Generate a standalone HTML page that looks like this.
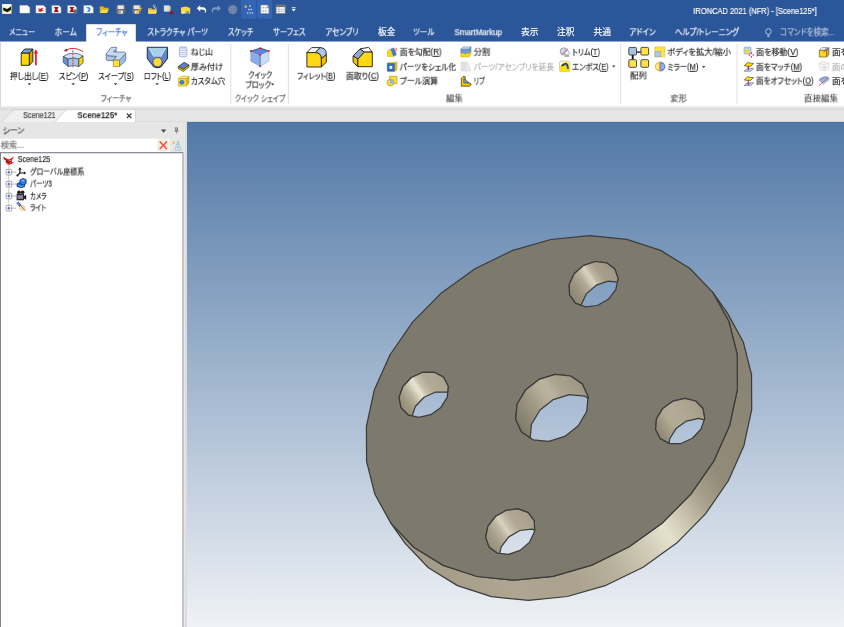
<!DOCTYPE html>
<html lang="ja"><head><meta charset="utf-8"><title>IRONCAD 2021 (NFR) - [Scene125*]</title>
<style>
html,body{margin:0;padding:0;}
body{width:844px;height:627px;overflow:hidden;position:relative;background:#fff;font-family:"Liberation Sans","Noto Sans CJK JP",sans-serif;}
.t{position:absolute;white-space:nowrap;line-height:14px;height:14px;transform-origin:0 50%;font-feature-settings:"palt";letter-spacing:0;will-change:transform;}
.t{-webkit-text-stroke:0.15px currentColor;}
.t u{text-decoration:underline;text-underline-offset:1px;text-decoration-thickness:0.6px;}
.disc{position:absolute;left:188px;top:122px;}
svg{position:absolute;overflow:visible;}
</style></head><body>
<svg class="bg" width="844" height="627" viewBox="0 0 844 627" style="left:0;top:0;">
<defs><linearGradient id="gview" x1="0" y1="0" x2="0" y2="1"><stop offset="0" stop-color="#5178a6"/><stop offset="1" stop-color="#eff2f6"/></linearGradient></defs>
<rect x="0" y="0" width="844" height="627" fill="#e6e6e6"/>
<rect x="0" y="0" width="844" height="41.700" fill="#2b579a"/>
<rect x="86.200" y="24.200" width="49.600" height="18" fill="#ffffff"/>
<rect x="0" y="41.700" width="844" height="65.200" fill="#ffffff"/>
<rect x="0" y="41.700" width="1" height="65.200" fill="#d9d9d9"/>
<path d="M0 107h844" stroke="#dadada" stroke-width=".7"/>
<g stroke="#e2e2e2" stroke-width="1"><path d="M230.800 44v60M288.400 44v60M620.600 44v60M737 44v60"/></g>
<rect x="0" y="138.700" width="169.800" height="13.600" fill="#ffffff"/>
<rect x="0.400" y="152.700" width="182.700" height="476" fill="#ffffff" stroke="#7c7e8c" stroke-width="1.100"/>
<rect x="183.700" y="121.800" width="3.600" height="506" fill="#dddddc"/><rect x="183.700" y="121.800" width="1.200" height="506" fill="#e9e9e9"/>
<rect x="187" y="121.900" width="657" height="505.100" fill="url(#gview)"/>
<rect x="187" y="121.900" width="657" height="1" fill="#486f9f" opacity=".6"/>
</svg>
<svg class="disc" width="656" height="505" viewBox="188 122 656 505">
<defs>
<linearGradient id="gside" gradientUnits="userSpaceOnUse" x1="402.7" y1="540.0" x2="729.7" y2="316.2">
<stop offset="0" stop-color="#a19a85"/><stop offset="0.15" stop-color="#aea690"/><stop offset="0.3" stop-color="#aaa28d"/><stop offset="0.4" stop-color="#b8b19b"/><stop offset="0.5" stop-color="#d2cdb8"/><stop offset="0.56" stop-color="#e4e2ce"/><stop offset="0.62" stop-color="#c9c3ad"/><stop offset="0.68" stop-color="#a9a18b"/><stop offset="0.75" stop-color="#928b78"/><stop offset="1" stop-color="#888273"/>
</linearGradient>
<linearGradient id="gh0" gradientUnits="userSpaceOnUse" x1="519.9" y1="429.8" x2="583.9" y2="386.0"><stop offset="0" stop-color="#7d7869"/><stop offset="0.15" stop-color="#8d8776"/><stop offset="0.35" stop-color="#a39b87"/><stop offset="0.52" stop-color="#b7b09a"/><stop offset="0.6" stop-color="#b9b29c"/><stop offset="0.72" stop-color="#aca48f"/><stop offset="1" stop-color="#9c9581"/></linearGradient>
<linearGradient id="gh1" gradientUnits="userSpaceOnUse" x1="571.7" y1="299.0" x2="615.1" y2="269.3"><stop offset="0" stop-color="#8a8473"/><stop offset="0.2" stop-color="#9b937f"/><stop offset="0.38" stop-color="#b3ab96"/><stop offset="0.47" stop-color="#cdc8b4"/><stop offset="0.53" stop-color="#d6d2be"/><stop offset="0.6" stop-color="#bcb59f"/><stop offset="0.72" stop-color="#a8a08b"/><stop offset="1" stop-color="#9e9682"/></linearGradient>
<linearGradient id="gh2" gradientUnits="userSpaceOnUse" x1="658.3" y1="436.2" x2="701.7" y2="406.4"><stop offset="0" stop-color="#8a8473"/><stop offset="0.15" stop-color="#9c9480"/><stop offset="0.35" stop-color="#b2aa95"/><stop offset="0.5" stop-color="#b3ab96"/><stop offset="0.8" stop-color="#aca48f"/><stop offset="1" stop-color="#a39b86"/></linearGradient>
<linearGradient id="gh3" gradientUnits="userSpaceOnUse" x1="488.7" y1="546.5" x2="532.1" y2="516.8"><stop offset="0" stop-color="#938c78"/><stop offset="0.18" stop-color="#a39c87"/><stop offset="0.34" stop-color="#b9b29c"/><stop offset="0.46" stop-color="#d6d3bf"/><stop offset="0.54" stop-color="#c4beaa"/><stop offset="0.67" stop-color="#b0a893"/><stop offset="1" stop-color="#a8a08b"/></linearGradient>
<linearGradient id="gh4" gradientUnits="userSpaceOnUse" x1="402.1" y1="409.4" x2="445.5" y2="379.6"><stop offset="0" stop-color="#928b78"/><stop offset="0.15" stop-color="#a09883"/><stop offset="0.3" stop-color="#bab39d"/><stop offset="0.42" stop-color="#dedbc7"/><stop offset="0.47" stop-color="#e6e4d2"/><stop offset="0.55" stop-color="#c8c2ad"/><stop offset="0.68" stop-color="#b3ab96"/><stop offset="1" stop-color="#aaa28d"/></linearGradient>
</defs>
<path d="M405.3 543.6 L428.4 567.7 L457.5 585.6 L491.4 596.7 L528.5 600.4 L567.3 596.5 L606.1 585.3 L643.1 567.2 L676.7 543.1 L705.5 513.9 L728.2 481.0 L743.9 445.7 L751.7 409.7 L751.5 374.5 L743.2 341.7 L727.1 312.6 L712.8 292.4 L728.9 321.5 L737.2 354.3 L737.4 389.5 L729.6 425.5 L713.9 460.8 L691.2 493.7 L662.4 522.9 L628.8 547.0 L591.8 565.1 L553.0 576.3 L514.2 580.2 L477.1 576.5 L443.2 565.4 L414.1 547.5 L391.0 523.4Z" fill="url(#gside)" stroke="#3c3c3c" stroke-width="1.25" stroke-linejoin="round"/>
<path d="M550.8 239.5 L512.0 250.7 L475.0 268.8 L441.4 292.9 L412.6 322.1 L389.9 355.0 L374.2 390.3 L366.4 426.3 L366.6 461.5 L374.9 494.3 L391.0 523.4 L414.1 547.5 L443.2 565.4 L477.1 576.5 L514.2 580.2 L553.0 576.3 L591.8 565.1 L628.8 547.0 L662.4 522.9 L691.2 493.7 L713.9 460.8 L729.6 425.5 L737.4 389.5 L737.2 354.3 L728.9 321.5 L712.8 292.4 L689.7 268.3 L660.6 250.4 L626.7 239.3 L589.6 235.6ZM548.7 441.4 L533.2 439.8 L521.5 431.9 L515.7 419.2 L517.1 404.3 L525.5 390.1 L539.0 379.4 L555.1 374.4 L570.6 376.0 L582.3 383.9 L588.1 396.6 L586.7 411.5 L578.3 425.7 L564.8 436.4ZM597.4 305.5 L585.6 306.9 L575.6 303.1 L569.6 294.9 L569.2 284.3 L574.2 273.7 L583.7 265.4 L595.4 261.5 L606.6 262.8 L614.8 268.9 L618.1 278.6 L615.8 289.6 L608.3 299.3ZM692.4 438.3 L681.0 443.5 L669.4 443.5 L660.2 438.5 L655.6 429.5 L656.5 418.7 L662.8 408.4 L673.1 401.1 L684.9 398.4 L695.6 401.0 L702.8 408.2 L704.7 418.4 L700.9 429.3ZM529.6 542.1 L520.1 550.4 L508.4 554.3 L497.2 553.0 L489.0 546.9 L485.7 537.2 L488.0 526.2 L495.5 516.5 L506.4 510.3 L518.2 508.9 L528.2 512.7 L534.2 520.9 L534.6 531.5ZM447.3 397.2 L440.9 407.4 L430.7 414.7 L418.8 417.4 L408.1 414.8 L401.0 407.6 L399.1 397.4 L402.9 386.5 L411.4 377.5 L422.8 372.3 L434.4 372.3 L443.6 377.3 L448.2 386.3Z" fill="#7d796c" fill-rule="evenodd" stroke="#3c3c3c" stroke-width="1.25" stroke-linejoin="round"/>
<path d="M588.1 396.6 L582.3 383.9 L570.6 376.0 L555.1 374.4 L539.0 379.4 L525.5 390.1 L517.1 404.3 L515.7 419.2 L521.5 431.9 L530.2 437.8 L531.4 424.5 L539.8 410.3 L553.3 399.6 L569.4 394.6 L584.9 396.2 L587.9 398.2Z" fill="url(#gh0)" stroke="#3c3c3c" stroke-width="1.25" stroke-linejoin="round"/>
<path d="M618.1 278.6 L614.8 268.9 L606.6 262.8 L595.4 261.5 L583.7 265.4 L574.2 273.7 L569.2 284.3 L569.6 294.9 L575.6 303.1 L581.3 305.3 L581.3 304.5 L586.5 293.6 L596.2 285.2 L608.1 281.2 L617.4 282.2Z" fill="url(#gh1)" stroke="#3c3c3c" stroke-width="1.25" stroke-linejoin="round"/>
<path d="M704.7 418.4 L702.8 408.2 L695.6 401.0 L684.9 398.4 L673.1 401.1 L662.8 408.4 L656.5 418.7 L655.6 429.5 L660.2 438.5 L669.2 443.4 L669.6 439.0 L676.0 428.6 L686.5 421.1 L698.5 418.4 L704.2 419.8Z" fill="url(#gh2)" stroke="#3c3c3c" stroke-width="1.25" stroke-linejoin="round"/>
<path d="M534.2 520.9 L528.2 512.7 L518.2 508.9 L506.4 510.3 L495.5 516.5 L488.0 526.2 L485.7 537.2 L489.0 546.9 L497.2 553.0 L499.8 553.3 L501.2 546.8 L508.8 536.9 L519.8 530.5 L531.8 529.1 L534.6 530.2Z" fill="url(#gh3)" stroke="#3c3c3c" stroke-width="1.25" stroke-linejoin="round"/>
<path d="M448.2 386.3 L443.6 377.3 L434.4 372.3 L422.8 372.3 L411.4 377.5 L402.9 386.5 L399.1 397.4 L401.0 407.6 L408.1 414.8 L412.1 415.8 L415.3 406.5 L424.0 397.3 L435.7 392.0 L447.5 392.0 L447.7 392.1Z" fill="url(#gh4)" stroke="#3c3c3c" stroke-width="1.25" stroke-linejoin="round"/>
</svg>
<svg class="icons" width="844" height="627" viewBox="0 0 844 627" style="left:0;top:0;">
<!-- ===== quick access toolbar ===== -->
<g id="qat">
<rect x="241" y="0" width="15.2" height="18.6" fill="#3365b4"/>
<rect x="257.2" y="0" width="15" height="18.6" fill="#3365b4"/>
<!-- app icon -->
<rect x="2" y="4" width="9.6" height="10" fill="#e9dc8a"/>
<path d="M2.4 4.3h8.8v4.2l-4.2 2.2-4.6-2.4z" fill="#f4f4f4"/>
<path d="M3.2 7.4l3.9 1.6 3.9-2.6v3.3l-3.6 2.5-4.2-2z" fill="#141414"/>
<path d="M3 11.2l4.2 1.7 3.6-2.2v1.5l-3.6 1.6-4.2-1.4z" fill="#fff"/>
<!-- new doc -->
<path d="M19.9 5.6h7.6l2.2 2v5.4h-9.8z" fill="#fdfdfd" stroke="#d9d9d9" stroke-width=".5"/>
<!-- doc + red bird -->
<path d="M36 5.6h7.6l2 2v5.4H36z" fill="#fbfbfb" stroke="#cfcfcf" stroke-width=".5"/>
<path d="M37.3 7.5l2.6 1.4 3.6-1.5-1.6 2.6 2 .6-3 1.2-3.2-.6 1.6-1.3z" fill="#d01818"/>
<!-- doc + red hourglass -->
<path d="M51.9 5.6h7l2.1 2v5.4h-9.1z" fill="#f7f7f7" stroke="#bdbdbd" stroke-width=".5"/>
<path d="M54 7h4.6l-1.3 2.4 1.5 2.6h-5l1.5-2.6z" fill="#a80f0f"/>
<!-- doc + red hourglass + gray -->
<path d="M67.6 5.6h7l2.1 2v5.4h-9.1z" fill="#f3f3f3" stroke="#a9a9a9" stroke-width=".5"/>
<path d="M69.6 7h4.6l-1.3 2.4 1.5 2.6h-5l1.5-2.6z" fill="#a80f0f"/>
<rect x="73.6" y="9.4" width="3.4" height="3.8" fill="#6e6e6e"/>
<!-- doc + blue -->
<path d="M83.8 5.6h7.2l2.2 2v5.4h-9.4z" fill="#fafafa" stroke="#c4c4c4" stroke-width=".5"/>
<path d="M86 7.2l3.2-.3 1.6 2.3-1.2 2.6-2.6.2 1.3-2.2z" fill="#2f8fe0"/>
<path d="M87.2 8.2l1.8 1.6" stroke="#d6ecff" stroke-width=".8"/>
<!-- folder -->
<path d="M99.8 6.6h3.6l1 1.1h4v1.6h-6.3l-2.3 3.8z" fill="#e0b226"/>
<path d="M102 9.3h7l-2 3.8h-7.2z" fill="#f7d65a"/>
<!-- save -->
<rect x="116.2" y="4.8" width="9" height="8.9" rx="1.2" fill="#6d6d6f"/>
<rect x="117.7" y="5.4" width="6" height="3.6" fill="#e8e8ea"/>
<rect x="118.6" y="10.6" width="4.2" height="3.1" fill="#f2f2f2"/>
<rect x="119.3" y="11.2" width="1.3" height="2" fill="#555"/>
<!-- save as -->
<rect x="132.2" y="4.8" width="9" height="8.9" rx="1.2" fill="#6d6d6f"/>
<rect x="133.7" y="5.4" width="6" height="3.6" fill="#e8e8ea"/>
<rect x="134.6" y="10.6" width="4.2" height="3.1" fill="#f2f2f2"/>
<path d="M136.2 12.4l4.6-5.2 1.2 1-4.6 5.2-1.6.5z" fill="#f0b429"/>
<!-- folder + blue -->
<path d="M148 8.2h3.4l1 1h4.2v4.4H148z" fill="#e8bc2c"/>
<path d="M148.6 10.6h8.2l-1 3.1h-7.6z" fill="#f9d95e"/>
<path d="M152.4 5l2.6-1.2 2.8 4.4-1.8 1.6z" fill="#3c76c8"/>
<path d="M153 5.4l3.4 4.8" stroke="#f5d44f" stroke-width="1"/>
<!-- doc + star -->
<path d="M164 5.4h5l1.4 1.4v4.6H164z" fill="#d6e6f8" stroke="#9fbfe6" stroke-width=".5"/>
<rect x="168.3" y="6.6" width="1.6" height="3.6" fill="#f3d24a"/>
<path d="M171.3 10v5M168.8 12.5h5M169.6 10.8l3.4 3.4M173 10.8l-3.4 3.4" stroke="#8a1430" stroke-width=".9"/>
<!-- yellow dots thing -->
<path d="M181 7.4l5-1 4.2 1.6v5.4H181z" fill="#f7d83e"/>
<circle cx="181.4" cy="5.6" r=".8" fill="#3b5c9a"/>
<rect x="182.4" y="11.6" width="2" height="2" fill="#e8eef8"/>
<rect x="186.6" y="11.4" width="2.2" height="2.2" fill="#2e86de"/>
<!-- undo -->
<path d="M196.8 8.3l3.4-3v2h2.6c2.200 0 3.400 1.500 3.400 3.300 0 1.300-.7 2.200-1.700 2.700.4-.6.500-1.100.5-1.700 0-1.300-.9-2.200-2.400-2.200h-2.400v2z" fill="#fff"/>
<!-- redo (dim) -->
<path d="M221 8.300l-3.400-3v2h-2.600c-2.200 0-3.400 1.500-3.400 3.300 0 1.300.7 2.200 1.700 2.700-.4-.6-.5-1.100-.5-1.700 0-1.300.9-2.200 2.400-2.200h2.400v2z" fill="#7895c6"/>
<!-- globe (dim) -->
<circle cx="232.700" cy="9.600" r="4.700" fill="#6a7da6"/>
<path d="M228 9.600h9.400M232.700 4.900v9.400M229.300 6.700c2 1.200 4.800 1.200 6.800 0M229.300 12.500c2-1.200 4.800-1.200 6.800 0" stroke="#8796b8" stroke-width=".5" fill="none"/>
<!-- star + dots -->
<path d="M245.700 4.800l.5 1.100 1.200.1-.9.800.3 1.200-1.100-.6-1.100.6.300-1.200-.9-.8 1.200-.1z" fill="#f5c518"/>
<g fill="#c7dcee"><rect x="249.300" y="5.300" width="1.500" height="1.400"/><rect x="248.200" y="8.800" width="1.400" height="1.400"/><rect x="250.500" y="8.800" width="1.400" height="1.400"/><rect x="247" y="12.300" width="1.300" height="1.300"/><rect x="249.400" y="12.300" width="1.300" height="1.300"/><rect x="251.700" y="12.300" width="1.300" height="1.300"/></g>
<!-- white doc -->
<path d="M260.800 5h6.600l1.500 1.200v7.400h-8.100z" fill="#fbfbfb" stroke="#8a8a8a" stroke-width=".6"/>
<path d="M267.400 5l1.500 1.200v2h-1.500z" fill="#7d7d7d"/>
<g fill="#9aa3ad"><rect x="262.600" y="7" width="1.500" height="1.400"/><rect x="265" y="7" width="1.500" height="1.400"/><rect x="262.600" y="10.400" width="1.500" height="1.400"/><rect x="265" y="10.400" width="1.500" height="1.400"/></g>
<!-- table -->
<rect x="276.100" y="5.100" width="9" height="8.200" fill="#fbfbfb" stroke="#8a8a8a" stroke-width=".6"/>
<rect x="276.100" y="5.100" width="9" height="2" fill="#6f6f6f"/>
<path d="M276.100 9.300h9M276.100 11.300h9M279 7.100v6.200" stroke="#9a9a9a" stroke-width=".6"/>
<!-- dropdown -->
<rect x="291.800" y="7.300" width="3.800" height=".9" fill="#fff"/>
<path d="M291.700 9.100h4l-2 2.400z" fill="#fff"/>
<!-- bulb -->
<g stroke="#c2cee4" stroke-width=".9" fill="none"><circle cx="768.400" cy="31.500" r="2.800"/><path d="M767.200 35.300h2.400M767.500 36.600h1.800"/></g>
</g>
<!-- ===== ribbon: feature group ===== -->
<g id="rib1" stroke-linejoin="round">
<!-- extrude -->
<path d="M21.200 53h8.200v12.300h-8.200z" fill="#ffd800" stroke="#1e1e1e" stroke-width=".9"/>
<path d="M21.200 53l3.600-4h8.100l-3.500 4z" fill="#6aa5e6" stroke="#1e1e1e" stroke-width=".9"/>
<path d="M29.400 53l3.500-4v12.600l-3.500 3.700z" fill="#d9a800" stroke="#1e1e1e" stroke-width=".9"/>
<path d="M35.900 65.200V52.500" stroke="#e31b23" stroke-width="1.700"/>
<path d="M33.700 53.500l2.200-4.200 2.200 4.200z" fill="#e31b23"/>
<!-- spin -->
<path d="M63.300 56.400q9.700-6.400 19.700-.5l-4.200 3.200q-5.300-2.200-10.700 0z" fill="#cfe0f4" stroke="#4a5d80" stroke-width=".8"/>
<path d="M63.300 56.400l4.800 2.700v7.400l-4.800-4z" fill="#6e93c8" stroke="#3c4f73" stroke-width=".8"/>
<path d="M68.100 59.100q5.400-2.200 10.700 0v7.400q-5.300-2-10.700 0z" fill="#a9c3e6" stroke="#3c4f73" stroke-width=".8"/>
<path d="M78.800 59.100l4.200-3.200v6.900l-4.200 3.700z" fill="#ffd800" stroke="#3c3c3c" stroke-width=".8"/>
<path d="M72.900 50.200v17" stroke="#c84a58" stroke-width="1.100" stroke-dasharray="2 1.100"/>
<path d="M65.600 50.200q8.600-4.200 17.400 1.300" fill="none" stroke="#c5303a" stroke-width="1"/>
<path d="M63.600 51l3.300-2.500.5 3.100z" fill="#a01c2c"/>
<!-- sweep -->
<path d="M106.200 53.900Q106.200 55 107.200 55.600L116.600 56.400L113.300 60.200V60.700L107.400 60.500Q106.200 60.100 106.200 59z" fill="#a9c6e8" stroke="#5a6b85" stroke-width=".8"/>
<path d="M125.700 53.500V60.600L119.500 66.600V60.200z" fill="#9dbbea" stroke="#5a6b85" stroke-width=".8"/>
<path d="M106.200 53.900L111.200 47.300H116.600V48.700L113.400 51.900L124.500 52.200Q125.700 52.500 125.700 53.500L119.500 60.200H113.300L116.600 56.400L107.200 55.600Q106.200 55 106.200 53.900z" fill="#c7d9f1" stroke="#5a6b85" stroke-width=".8"/>
<path d="M113.700 51.900L116.600 48.900V51.900z" fill="#5e86c8"/>
<rect x="113.300" y="60.200" width="6.200" height="6.400" fill="#ffe135" stroke="#8a7a3a" stroke-width=".7"/>
<!-- loft -->
<path d="M147.300 47.200h20.200v11.300l-6.300 8q-3.800 2.200-7.600 0l-6.300-8z" fill="#6487c4" stroke="#263a66" stroke-width="1.100"/>
<path d="M148.900 47.900h16.900l-5 8.800h-6.900z" fill="#a3d2ea"/>
<path d="M148.900 47.900l5 8.800M165.800 47.900l-5 8.800" stroke="#f4f8fc" stroke-width=".7"/>
<circle cx="157.500" cy="62.100" r="4.600" fill="#ffd93b" stroke="#33446e" stroke-width=".8"/>
<!-- thread -->
<rect x="179.400" y="46.900" width="7.400" height="10" rx="1.400" fill="#c3d3ea" stroke="#8fa6c8" stroke-width=".7"/>
<path d="M180 49.200h6.200M180 51.500h6.200M180 53.800h6.200M180 55.700h6.200" stroke="#f2f6fb" stroke-width=".9"/>
<!-- thicken -->
<path d="M178.300 66.600l5.800-4.300 4.900 2.700-5.600 4.400z" fill="#5f80be" stroke="#20304f" stroke-width=".7"/>
<path d="M178.300 66.600l5.100 2.800 5.600-4.400v2l-5.600 4.400-5.100-2.800z" fill="#f0c800" stroke="#3a3210" stroke-width=".7"/>
<!-- custom hole -->
<path d="M178.300 78.600l2.800-2.300h7.900l-2.700 2.300z" fill="#fbe88a" stroke="#c9a21c" stroke-width=".6"/>
<path d="M186.300 78.600l2.700-2.300v7.200l-2.700 2.600z" fill="#d9b52a" stroke="#c9a21c" stroke-width=".6"/>
<rect x="178.300" y="78.600" width="8" height="7.500" fill="#f8da3c" stroke="#c9a21c" stroke-width=".6"/>
<circle cx="181.900" cy="82.300" r="2.100" fill="#3a7fd8" stroke="#2a5fa8" stroke-width=".5"/>
<!-- quick block -->
<path d="M250.800 51.100l9.600-3 8.500 3-8.700 3.900z" fill="#5f86d8" stroke="#1e2c4f" stroke-width=".7"/>
<path d="M250.800 51.100l9.400 3.900v11.300l-9.400-5.100z" fill="#8aaee8" stroke="#6f8fc8" stroke-width=".6"/>
<path d="M260.200 55l8.700-3.900v10.100l-8.700 5.100z" fill="#c9dcf6" stroke="#8fabd8" stroke-width=".6"/>
<path d="M260.200 56.500v9" stroke="#2a2a2a" stroke-width=".8" stroke-dasharray="1 1"/>
<g fill="#f01818"><circle cx="250.900" cy="51.100" r="1"/><circle cx="260.400" cy="48.200" r="1"/><circle cx="268.900" cy="51.100" r="1"/><circle cx="260.200" cy="55" r="1"/><circle cx="260.200" cy="66.300" r="1"/></g>
<!-- fillet -->
<path d="M306.900 52.600l4.800-5h8.400l-4.800 5z" fill="#fdfdfd" stroke="#1e1e1e" stroke-width=".9"/>
<path d="M315.300 52.600q6 .4 6 6.400l5-4.500q.3-6.600-6.200-6.900z" fill="#a9c6ea" stroke="#1e1e1e" stroke-width=".9"/>
<path d="M321.300 59l5-4.500v7.700l-5 4.800z" fill="#f2c200" stroke="#1e1e1e" stroke-width=".9"/>
<path d="M306.900 52.600h8.400q6 .4 6 6.400v8h-14.400z" fill="#ffd814" stroke="#1e1e1e" stroke-width=".9"/>
<!-- chamfer -->
<path d="M360 48.900l8.600-1.500 3.700 4.700h-8z" fill="#fdfdfd" stroke="#1e1e1e" stroke-width=".9"/>
<path d="M353.100 55.900l6.900-7 4.300 3.200-6.400 7z" fill="#8fa8d2" stroke="#1e1e1e" stroke-width=".9"/>
<path d="M353.100 55.900l4.800 3.200v7.600l-4.800-4.400z" fill="#f2c200" stroke="#1e1e1e" stroke-width=".9"/>
<path d="M357.900 59.100l6.400-7h8v14.600h-14.400z" fill="#ffd814" stroke="#1e1e1e" stroke-width=".9"/>
<!-- dropdown arrows -->
<g fill="#3a3a3a"><path d="M27.500 83.200h3.600l-1.800 2.100z"/><path d="M71.300 83.200h3.600l-1.800 2.100z"/><path d="M113.800 83.200h3.600l-1.800 2.100z"/><path d="M155.300 83.200h3.600l-1.800 2.100z"/><path d="M270.900 83.500h3.400l-1.700 2z"/><path d="M612 65.600h3.400l-1.700 2z"/><path d="M702 65.900h3.400l-1.700 2z"/></g>
</g>
<!-- ===== ribbon: edit / transform / direct edit ===== -->
<g id="rib2" stroke-linejoin="round">
<!-- draft face -->
<path d="M387.400 50.800l3-2.300 2.600 7.900h-5.600z" fill="#f8d820" stroke="#c9a21c" stroke-width=".5"/>
<path d="M390.800 48.700l2.600-.7 3 6.400-2.600 2z" fill="#3f7fd0" stroke="#27508a" stroke-width=".5"/><path d="M387.400 50.800l3.400-2.100 2.600-.7-2.600-.4-3.200 1.600z" fill="#dfe9f6"/>
<path d="M394.600 48l1.800 3.800M395.800 47.600l1.200 2.600" stroke="#e02626" stroke-width=".6"/>
<!-- shell -->
<path d="M387.300 63.400l2.400-1.200h7.300l-2.600 1.200z" fill="#fbe88a" stroke="#c9a21c" stroke-width=".5"/>
<path d="M394.400 63.400l2.600-1.200v7.800l-2.600 1.400z" fill="#e6bc1c" stroke="#c9a21c" stroke-width=".5"/>
<rect x="387.300" y="63.400" width="7.100" height="7.900" fill="#2f6fc4" stroke="#1f4f94" stroke-width=".5"/>
<rect x="389.500" y="65.900" width="2.700" height="2.900" fill="#f4f7fb"/>
<!-- boolean -->
<rect x="389.600" y="76.300" width="7.300" height="7.400" fill="#fadc3c" stroke="#b8960a" stroke-width=".7"/>
<circle cx="390.500" cy="82.600" r="3.400" fill="#fadc3c" stroke="#b8960a" stroke-width=".7"/>
<path d="M389.900 79.300q3.800.2 3.900 4.100h-3.900z" fill="#8fb2e8"/>
<!-- split -->
<path d="M460.900 49.300l2.200-2.400h7.900l-2 2.400z" fill="#c4d8f2" stroke="#5f7fae" stroke-width=".5"/>
<path d="M460.900 49.300h8.100l2-2.400v4.800l-2 2.200-1.800-.8-2.100 1.100-2.200-1.200-2 .8z" fill="#6f9ad8" stroke="#4a6a9c" stroke-width=".5"/>
<path d="M460.900 53.800l2-.8 2.200 1.200 2.100-1.100 1.800.8 2-2.200v3l-2 2.300h-8.100z" fill="#ffd814" stroke="#c9a21c" stroke-width=".5"/>
<!-- extend (disabled) -->
<path d="M461.200 62.200h4.300v8.800h-4.300z" fill="#e1e1e1" stroke="#cdcdcd" stroke-width=".5"/>
<path d="M465.500 62.200h2.400l3 8.800h-5.400z" fill="#ebebeb" stroke="#d3d3d3" stroke-width=".5"/>
<!-- rib -->
<path d="M461.300 78.400l1.800-1.900h2l.2 6.300h3.800l1.900 1v1.300l-1.600 1.100h-8.100z" fill="#f0c800" stroke="#3a3210" stroke-width=".7"/>
<path d="M463.800 78.400l5.300 4.400h-5.300z" fill="#7f9fd8" stroke="#2a3a5c" stroke-width=".6"/>
<!-- trim -->
<circle cx="563.700" cy="51.300" r="3.500" fill="#cfd9ea" stroke="#8d97ab" stroke-width=".9"/>
<circle cx="567" cy="53" r="2.300" fill="#f3f5f9" stroke="#9aa2b2" stroke-width=".8"/>
<path d="M561.500 55l6.400-6.200" stroke="#e0525e" stroke-width="1"/>
<path d="M564.400 56h4.600" stroke="#6a6f78" stroke-width="1"/>
<!-- emboss -->
<rect x="559.600" y="61.200" width="10.200" height="10.400" rx="1.200" fill="#fdfdfa" stroke="#b8a85a" stroke-width=".6"/>
<path d="M559.900 67q2.600-4.800 6-4.900 3.600.4 3.700 4.600v4.600h-9.700z" fill="#ffe000"/>
<path d="M562 65.600q2.600-2.400 4.400-1.800 1.800 1.200 1.600 4.600" fill="none" stroke="#1c2a50" stroke-width="1.500" stroke-linecap="round"/>
<path d="M563.200 66q2-1.500 3-1 .9 1.200.8 3.200" fill="none" stroke="#4e78c8" stroke-width=".8"/>
<!-- pattern -->
<path d="M636.500 52.100h4.500" stroke="#111" stroke-width="1.300"/><path d="M632.700 54.600v5" stroke="#111" stroke-width="1.900"/>
<rect x="628.800" y="47.400" width="7.700" height="7.600" rx="1" fill="#a9c0e0" stroke="#3c3c3c" stroke-width=".9"/>
<rect x="640.900" y="47.400" width="7.700" height="7.600" rx="1" fill="#ffe14a" stroke="#3c3c3c" stroke-width=".9"/>
<rect x="628.800" y="59.700" width="7.700" height="7.600" rx="1" fill="#ffe14a" stroke="#3c3c3c" stroke-width=".9"/>
<rect x="640.900" y="59.700" width="7.700" height="7.600" rx="1" fill="#ffe14a" stroke="#3c3c3c" stroke-width=".9"/>
<!-- scale body -->
<rect x="654.800" y="46.900" width="10" height="10" fill="#ffe14a" stroke="#d8b82a" stroke-width=".5"/>
<rect x="655.200" y="51.600" width="5.300" height="5.100" fill="#9ec3e6" stroke="#7a9fcf" stroke-width=".6"/><path d="M657 51.600v5.100M658.800 51.600v5.100M655.200 53.300h5.300M655.200 55h5.300" stroke="#c4dcf2" stroke-width=".4"/>
<!-- mirror -->
<path d="M659.500 62.200a4.400 4.400 0 0 0 0 8.800z" fill="#f5d63a" stroke="#c9a21c" stroke-width=".5"/><path d="M659 63.600a3 3 0 0 0 0 6z" fill="#fbe98a"/>
<path d="M660.700 62.200a4.400 4.400 0 0 1 0 8.800z" fill="#5b8de0" stroke="#3a63b0" stroke-width=".5"/><path d="M661.200 63.600a3 3 0 0 1 0 6z" fill="#8fb4f0"/>
<path d="M660.100 61.600v9.900" stroke="#e64a5a" stroke-width=".8"/>
<!-- move face -->
<rect x="744.100" y="47.100" width="6.900" height="6.900" rx=".8" fill="#b9d4f0" stroke="#7fa6d8" stroke-width=".7"/>
<rect x="745.300" y="49.400" width="3.700" height="3.900" fill="#ffd814"/>
<path d="M751.400 52.700l1 1.100-1 1.100-1-1.100zM749.500 54.500l1 1.100-1 1.100-1-1.100zM753.200 54.500l1 1.100-1 1.100-1-1.100zM751.400 56.300l1 1.100-1 1.100-1-1.100z" fill="#d8444f" transform="translate(0 -.6)"/>
<!-- match face -->
<path d="M744.300 65.700l3.300-3.200q3 .9 6 .9l-3 2.800q-3.200.3-6.300-.5z" fill="#ffe000" stroke="#2a2a1a" stroke-width=".6"/>
<path d="M744.100 71.300l3.200-2.700h6.500l-3.200 2.700z" fill="#b4cff2" stroke="#5a6f9a" stroke-width=".6"/>
<path d="M748.300 66.600v3.600" stroke="#d81e2e" stroke-width="1"/><path d="M747.100 67.600l1.200-1.800 1.200 1.800z" fill="#d81e2e"/>
<!-- offset face -->
<path d="M744.300 79.900l3.300-3.200q3 .9 6 .9l-3 2.800q-3.200.3-6.300-.5z" fill="#ffe000" stroke="#2a2a1a" stroke-width=".6"/>
<path d="M744.100 85.500l3.200-2.700h6.500l-3.200 2.700z" fill="#b4cff2" stroke="#5a6f9a" stroke-width=".6"/>
<path d="M748.300 80.600v3.600" stroke="#d81e2e" stroke-width="1"/><path d="M747.100 83.400l1.200 1.800 1.200-1.800z" fill="#d81e2e"/>
<!-- 2nd column -->
<path d="M819.300 50.300l2.400-2.600h7.200l-2.300 2.600z" fill="#fdfdfd" stroke="#6a6a6a" stroke-width=".6"/>
<path d="M826.600 50.300l2.300-2.600v7l-2.300 2.300z" fill="#e6bc1c" stroke="#4a4a3a" stroke-width=".6"/>
<rect x="819.300" y="50.300" width="7.300" height="6.700" fill="#ffd814" stroke="#4a4a3a" stroke-width=".6"/>
<path d="M823.800 51.800l3.400-3.400" stroke="#d81e2e" stroke-width="1"/>
<path d="M824.800 47.400l1.700 1.600 2-.8-.6 1.900 1.100 1" stroke="#5a7fd0" stroke-width=".8" fill="none"/>
<g fill="#f4f4f4" stroke="#d9d9d9" stroke-width=".6"><ellipse cx="824" cy="63.200" rx="4.600" ry="1.700"/><path d="M819.400 63.200v6.200q4.600 3 9.200 0v-6.200q-4.600 2.800-9.200 0z"/><path d="M823.200 66.200h2.600v2.600h-2.600z" fill="#e0e0e0"/></g>
<path d="M819.300 79.200q3.400-2.800 7-2.400l2.600 1.600q-4 .6-6.400 4.200z" fill="#a9c3ea" stroke="#5f7fae" stroke-width=".6"/>
<path d="M822.500 82.600l1 1.900q2.200-3.200 5.600-3.900l-.2-2.200" fill="#f3f6fb" stroke="#8a94a6" stroke-width=".5"/>
<path d="M819.200 85.400l9.200-8.800" stroke="#e2525e" stroke-width=".8"/>
</g>
<path d="M819.500 80.600l5.600-3.800 3.800 2-5.600 4.200z" fill="#9fb8e0" stroke="#5f7fae" stroke-width=".6"/>
<path d="M819.600 85.400l9-8.600" stroke="#e05060" stroke-width=".7"/>
</g>
<!-- ===== doc tabs + left panel ===== -->
<g id="panelicons">
<!-- doc tabs -->
<path d="M0 109.300h844" stroke="#d2d2d2" stroke-width=".8"/>
<path d="M1.500 122L13.500 109.800H66L55 122z" fill="#efefef"/><path d="M1.500 122L13.500 109.800H66" fill="none" stroke="#cbcbcb" stroke-width=".7"/>
<path d="M55 122L66.500 109.800H135.400V122z" fill="#ffffff"/>
<path d="M55 122L66.500 109.800H135.400V122" fill="none" stroke="#cfcfcf" stroke-width=".7"/>
<path d="M126.900 113.500l4.500 4.500M131.400 113.500l-4.500 4.500" stroke="#3a3a3a" stroke-width="1.100"/><path d="M135.400 121.500H844" stroke="#d6d6d6" stroke-width=".7"/>
<!-- header icons -->
<path d="M160.900 129.400h5.400l-2.700 3.300z" fill="#4a4a4a"/>
<path d="M174.900 127.400h3v3.200l.8.900h-2v2.200h-.6v-2.200h-2l.8-.9z" fill="#6a6a6a"/>
<rect x="175.600" y="127.900" width="1" height="2.800" fill="#cfcfcf"/>
<!-- search X -->
<rect x="157.300" y="139.300" width="11.900" height="11.700" rx="1.500" fill="#f0eee1"/>
<path d="M159.700 141.600l7.200 7.400M166.900 141.600l-7.200 7.400" stroke="#ff4b3a" stroke-width="1.500"/>
<!-- filter icon -->
<path d="M173.700 140.900l.5 1 1.100.1-.8.800.2 1.100-1-.5-1 .5.200-1.100-.8-.8 1.100-.1z" fill="#f0b82a"/>
<path d="M178 141l3.300 9.200h-6.600z" fill="#e4f1f3" stroke="#8fbfcd" stroke-width=".7"/>
<path d="M176.800 144.400h2.400M175.800 147.400h4.400M178 141v9.200" stroke="#8fbfcd" stroke-width=".6"/>
<!-- tree lines -->
<path d="M8.850 164.600v41" stroke="#c4c4c4" stroke-width=".9"/>
<path d="M11.700 172.200h4.300M11.700 184.100h4.300M11.700 196h4.300M11.700 208.200h4.300" stroke="#b4b4b4" stroke-width=".9"/>
<g fill="#fff" stroke="#9a9a9a" stroke-width=".9"><rect x="6.100" y="169.400" width="5.500" height="5.600" rx=".9"/><rect x="6.100" y="181.300" width="5.500" height="5.600" rx=".9"/><rect x="6.100" y="193.200" width="5.500" height="5.600" rx=".9"/><rect x="6.100" y="205.400" width="5.500" height="5.600" rx=".9"/></g>
<path d="M7.350 172.200h3M8.850 170.700v3M7.350 184.100h3M8.850 182.600v3M7.350 196h3M8.850 194.500v3M7.350 208.200h3M8.850 206.700v3" stroke="#4060c0" stroke-width="1"/>
<!-- scene icon (red bird) -->
<path d="M3 156.600l5 2.600h1.800l4.400-2.900-1.900 3.200-3.300 1.500h-2.200l-2.600-1.600z" fill="#e61616"/>
<path d="M5.800 159.900l3.200 1.700 3-1.500-.3 1.700-2.700 1.400-3-.9z" fill="#7a0a0a"/>
<path d="M3.400 161.400l3.400.6 2.400 1.300 2.700-1.200 2.200-.2-2.600 2-2.400.9-3-.8 1.500-.9z" fill="#e61616"/>
<circle cx="8.700" cy="155.200" r=".7" fill="#d4d4d4"/>
<!-- axis icon -->
<g stroke="#111" stroke-width="1.200" fill="none"><path d="M19.900 169v4l-2.300 2.300M19.900 173h4.600"/></g>
<path d="M18.300 169.700l1.600-2.500 1.600 2.500zM23.900 171.400l2.300 1.600-2.300 1.600z" fill="#111"/>
<circle cx="17.400" cy="175.500" r="1" fill="#111"/>
<!-- part icon -->
<path d="M17 183.700l3-1.300 4.600 1.500v2.700l-3.400 1.200-4.200-1.400z" fill="#1f6fe0" stroke="#0a1e50" stroke-width=".7"/>
<path d="M19.900 180l3.100-1.500 3.100 1.200v3.900l-2.900 1.500-3.300-1.300z" fill="#2b7be8" stroke="#0a1e50" stroke-width=".7"/>
<path d="M20.900 180.600l2.200-.9 1.900.7-2 1z" fill="#8fc0ff"/>
<path d="M18 185.300l3 .9 2.600-.9" stroke="#8fc0ff" stroke-width=".6" fill="none"/>
<!-- camera icon -->
<circle cx="19" cy="192.200" r="1.800" fill="#1c1c1c"/><circle cx="22.600" cy="192.200" r="1.800" fill="#1c1c1c"/>
<rect x="16.600" y="193.600" width="7.400" height="6.700" fill="#2a2a2a"/>
<path d="M24 196l2.200-1.300v5L24 198.400z" fill="#1c1c1c"/>
<rect x="17.600" y="195.200" width="5.400" height="3.600" fill="#8f88ae"/>
<!-- light icon -->
<path d="M16.600 202.800l2-.6 5 5.400-2.200 1.600z" fill="#3f6fd8" stroke="#27448a" stroke-width=".5"/>
<circle cx="22.300" cy="208" r="2.700" fill="#f3e9a0" stroke="#c9c1a0" stroke-width=".5"/>
<path d="M20.800 205.600l4.600 5.200" stroke="#e0303a" stroke-width=".8"/>
<path d="M17.400 203.400l1.600 1.600" stroke="#cfe0ff" stroke-width=".6"/>
</g>
</svg>

<span class="t" id="t0" style="left:693px;top:4px;font-size:8.4px;color:#fff;transform:translate(0.30px,0.00px) scaleX(0.8956);">IRONCAD 2021 (NFR) - [Scene125*]</span>
<span class="t" id="t1" style="left:9px;top:25px;font-size:8.6px;color:#fff;transform:translate(0.00px,0.20px) scaleX(0.8341);">メニュー</span>
<span class="t" id="t2" style="left:54px;top:25px;font-size:8.6px;color:#fff;transform:translate(0.80px,0.20px) scaleX(0.8945);">ホーム</span>
<span class="t" id="t3" style="left:96px;top:25px;font-size:8.6px;color:#2d6ad8;transform:translate(0.30px,0.20px) scaleX(0.8461);">フィーチャ</span>
<span class="t" id="t4" style="left:147px;top:25px;font-size:8.6px;color:#fff;transform:translate(0.50px,0.20px) scaleX(0.8527);">ストラクチャ パーツ</span>
<span class="t" id="t5" style="left:228px;top:25px;font-size:8.6px;color:#fff;transform:translate(0.00px,0.20px) scaleX(0.8391);">スケッチ</span>
<span class="t" id="t6" style="left:273px;top:25px;font-size:8.6px;color:#fff;transform:translate(0.00px,0.20px) scaleX(0.8553);">サーフェス</span>
<span class="t" id="t7" style="left:325px;top:25px;font-size:8.6px;color:#fff;transform:translate(0.50px,0.20px) scaleX(0.8695);">アセンブリ</span>
<span class="t" id="t8" style="left:378px;top:25px;font-size:8.6px;color:#fff;transform:translate(0.00px,0.20px) scaleX(1.0056);">板金</span>
<span class="t" id="t9" style="left:413px;top:25px;font-size:8.6px;color:#fff;transform:translate(0.00px,0.20px) scaleX(0.8804);">ツール</span>
<span class="t" id="t10" style="left:454px;top:25px;font-size:8.6px;color:#fff;transform:translate(0.50px,0.20px) scaleX(0.9209);">SmartMarkup</span>
<span class="t" id="t11" style="left:521px;top:25px;font-size:8.6px;color:#fff;transform:translate(0.00px,0.20px) scaleX(1.0173);">表示</span>
<span class="t" id="t12" style="left:557px;top:25px;font-size:8.6px;color:#fff;transform:translate(0.00px,0.20px) scaleX(1.0173);">注釈</span>
<span class="t" id="t13" style="left:593px;top:25px;font-size:8.6px;color:#fff;transform:translate(0.50px,0.20px) scaleX(1.0173);">共通</span>
<span class="t" id="t14" style="left:629px;top:25px;font-size:8.6px;color:#fff;transform:translate(0.50px,0.20px) scaleX(0.8662);">アドイン</span>
<span class="t" id="t15" style="left:674px;top:25px;font-size:8.6px;color:#fff;transform:translate(0.80px,0.20px) scaleX(0.8789);">ヘルプ/トレーニング</span>
<span class="t" id="t16" style="left:780px;top:25px;font-size:8.6px;color:#B9C7DF;transform:translate(0.00px,0.20px) scaleX(0.8789);">コマンドを検索...</span>
<span class="t" id="t17" style="left:10px;top:69px;font-size:8.5px;color:#222222;transform:translate(0.00px,0.00px) scaleX(0.8966);">押し出し(<u>E</u>)</span>
<span class="t" id="t18" style="left:58px;top:69px;font-size:8.5px;color:#222222;transform:translate(0.80px,0.00px) scaleX(0.8562);">スピン(<u>P</u>)</span>
<span class="t" id="t19" style="left:98px;top:69px;font-size:8.5px;color:#222222;transform:translate(0.30px,0.00px) scaleX(0.8418);">スイープ(<u>S</u>)</span>
<span class="t" id="t20" style="left:143px;top:69px;font-size:8.5px;color:#222222;transform:translate(0.80px,0.00px) scaleX(0.8348);">ロフト(<u>L</u>)</span>
<span class="t" id="t21" style="left:190px;top:44px;font-size:8.5px;color:#222222;transform:translate(0.80px,0.80px) scaleX(0.8985);">ねじ山</span>
<span class="t" id="t22" style="left:190px;top:59px;font-size:8.5px;color:#222222;transform:translate(0.80px,0.80px) scaleX(0.9576);">厚み付け</span>
<span class="t" id="t23" style="left:190px;top:73px;font-size:8.5px;color:#222222;transform:translate(0.80px,0.90px) scaleX(0.8675);">カスタム穴</span>
<span class="t" id="t24" style="left:100px;top:91px;font-size:8.5px;color:#555555;transform:translate(0.80px,0.20px) scaleX(0.8360);">フィーチャ</span>
<span class="t" id="t25" style="left:248px;top:67px;font-size:8.5px;color:#222222;transform:translate(0.30px,0.70px) scaleX(0.8081);">クイック</span>
<span class="t" id="t26" style="left:245px;top:77px;font-size:8.5px;color:#222222;transform:translate(0.50px,0.60px) scaleX(0.8482);">ブロック</span>
<span class="t" id="t27" style="left:234px;top:91px;font-size:8.5px;color:#555555;transform:translate(0.80px,0.20px) scaleX(0.8149);">クイック シェイプ</span>
<span class="t" id="t28" style="left:297px;top:68px;font-size:8.5px;color:#222222;transform:translate(0.30px,0.80px) scaleX(0.8340);">フィレット(<u>B</u>)</span>
<span class="t" id="t29" style="left:346px;top:68px;font-size:8.5px;color:#222222;transform:translate(0.00px,0.80px) scaleX(0.9195);">面取り(<u>C</u>)</span>
<span class="t" id="t30" style="left:399px;top:44px;font-size:8.5px;color:#222222;transform:translate(0.70px,0.80px) scaleX(0.9276);">面を勾配(<u>R</u>)</span>
<span class="t" id="t31" style="left:399px;top:59px;font-size:8.5px;color:#222222;transform:translate(0.70px,0.80px) scaleX(0.8894);">パーツをシェル化</span>
<span class="t" id="t32" style="left:399px;top:73px;font-size:8.5px;color:#222222;transform:translate(0.70px,0.80px) scaleX(0.9416);">ブール演算</span>
<span class="t" id="t33" style="left:473px;top:44px;font-size:8.5px;color:#222222;transform:translate(0.70px,0.80px) scaleX(0.9697);">分割</span>
<span class="t" id="t34" style="left:473px;top:59px;font-size:8.5px;color:#ADADAD;transform:translate(0.70px,0.80px) scaleX(0.9045);">パーツ/アセンブリを延長</span>
<span class="t" id="t35" style="left:473px;top:73px;font-size:8.5px;color:#222222;transform:translate(0.70px,0.80px) scaleX(0.7558);">リブ</span>
<span class="t" id="t36" style="left:572px;top:44px;font-size:8.5px;color:#222222;transform:translate(0.20px,0.90px) scaleX(0.8560);">トリム(<u>T</u>)</span>
<span class="t" id="t37" style="left:572px;top:59px;font-size:8.5px;color:#222222;transform:translate(0.20px,0.80px) scaleX(0.8437);">エンボス(<u>E</u>)</span>
<span class="t" id="t38" style="left:446px;top:91px;font-size:8.5px;color:#555555;transform:translate(0.00px,0.20px) scaleX(0.9873);">編集</span>
<span class="t" id="t39" style="left:630px;top:68px;font-size:8.5px;color:#222222;transform:translate(0.10px,0.40px) scaleX(0.9756);">配列</span>
<span class="t" id="t40" style="left:667px;top:44px;font-size:8.5px;color:#222222;transform:translate(0.20px,0.80px) scaleX(0.9617);">ボディを拡大/縮小</span>
<span class="t" id="t41" style="left:667px;top:59px;font-size:8.5px;color:#222222;transform:translate(0.20px,0.80px) scaleX(0.8785);">ミラー(<u>M</u>)</span>
<span class="t" id="t42" style="left:670px;top:91px;font-size:8.5px;color:#555555;transform:translate(0.50px,0.20px) scaleX(0.9697);">変形</span>
<span class="t" id="t43" style="left:756px;top:44px;font-size:8.5px;color:#222222;transform:translate(0.00px,0.90px) scaleX(0.9462);">面を移動(<u>V</u>)</span>
<span class="t" id="t44" style="left:756px;top:59px;font-size:8.5px;color:#222222;transform:translate(0.00px,0.80px) scaleX(0.9028);">面をマッチ(<u>M</u>)</span>
<span class="t" id="t45" style="left:756px;top:73px;font-size:8.5px;color:#222222;transform:translate(0.00px,0.60px) scaleX(0.8861);">面をオフセット(<u>O</u>)</span>
<span class="t" id="t46" style="left:831px;top:44px;font-size:8.5px;color:#222222;transform:translate(0.90px,0.90px) scaleX(1.0147);">面を</span>
<span class="t" id="t47" style="left:831px;top:59px;font-size:8.5px;color:#ADADAD;transform:translate(0.90px,0.80px) scaleX(0.9938);">面の</span>
<span class="t" id="t48" style="left:831px;top:73px;font-size:8.5px;color:#222222;transform:translate(0.90px,0.60px) scaleX(1.0147);">面を</span>
<span class="t" id="t49" style="left:804px;top:91px;font-size:8.5px;color:#555555;transform:translate(0.00px,0.20px) scaleX(0.9995);">直接編集</span>
<span class="t" id="t50" style="left:23px;top:108px;font-size:8.3px;color:#3a3a3a;transform:translate(0.20px,0.10px) scaleX(0.8642);">Scene121</span>
<span class="t" id="t51" style="left:77px;top:108px;font-size:8.3px;color:#222;transform:translate(0.30px,0.20px) scaleX(0.9631);font-weight:bold;-webkit-text-stroke:0;">Scene125*</span>
<span class="t" id="t52" style="left:2px;top:123px;font-size:8.4px;color:#303030;transform:translate(0.50px,0.30px) scaleX(0.9465);">シーン</span>
<span class="t" id="t53" style="left:0px;top:137px;font-size:8.4px;color:#6a6a6a;transform:translate(0.80px,0.80px) scaleX(0.9775);">検索...</span>
<span class="t" id="t54" style="left:17px;top:152px;font-size:8.3px;color:#181818;transform:translate(0.60px,0.10px) scaleX(0.8749);">Scene125</span>
<span class="t" id="t55" style="left:30px;top:164px;font-size:8.3px;color:#181818;transform:translate(0.00px,0.50px) scaleX(0.8458);">グローバル座標系</span>
<span class="t" id="t56" style="left:30px;top:176px;font-size:8.3px;color:#181818;transform:translate(0.00px,0.60px) scaleX(0.7764);">パーツ3</span>
<span class="t" id="t57" style="left:30px;top:188px;font-size:8.3px;color:#181818;transform:translate(0.00px,0.80px) scaleX(0.7503);">カメラ</span>
<span class="t" id="t58" style="left:30px;top:200px;font-size:8.3px;color:#181818;transform:translate(0.00px,0.30px) scaleX(0.7760);">ライト</span>
</body></html>
